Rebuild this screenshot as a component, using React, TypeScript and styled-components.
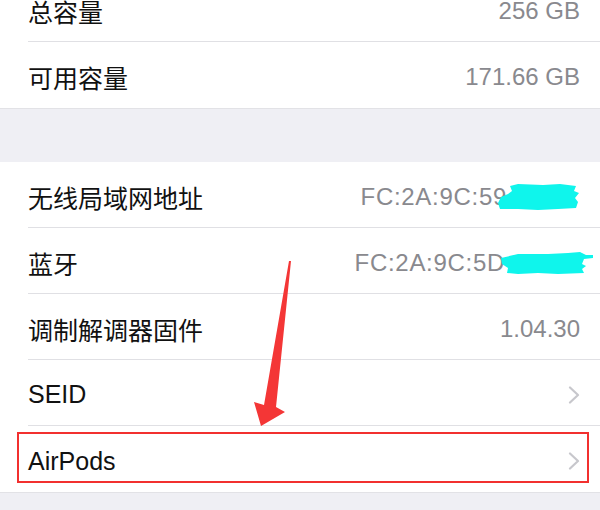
import styled, { createGlobalStyle } from 'styled-components'

const GlobalStyle = createGlobalStyle`
  html, body {
    margin: 0;
    padding: 0;
    background: #efeff4;
    overflow: hidden;
  }
`

const Page = styled.div`
  position: relative;
  width: 600px;
  height: 510px;
  overflow: hidden;
  background: #efeff4;
  font-family: 'Liberation Sans', 'Noto Sans CJK SC', sans-serif;
`

const Sheet = styled.div`
  display: flex;
  flex-direction: column;
  gap: 53px;
  margin-top: -24px;
`

const Group = styled.div`
  background: #fff;
  border-bottom: 1px solid #e2e2e6;
`

const Row = styled.div<{ last?: boolean }>`
  display: flex;
  align-items: center;
  height: 66px;
  margin-left: 28px;
  padding: 4px 20px 0 0;
  box-sizing: border-box;
  border-bottom: ${(p) => (p.last ? 'none' : '1px solid #e0e0e4')};
`

const Label = styled.span`
  flex: 1;
  font-size: 25px;
  color: #111;
`

const Value = styled.span<{ $spaced?: boolean }>`
  display: flex;
  align-items: center;
  font-size: 24px;
  color: #89898e;
  white-space: nowrap;
  letter-spacing: ${(p) => (p.$spaced ? '0.7px' : 'normal')};
`

const Redact = styled.svg<{ $left: number; $right: number }>`
  display: block;
  flex-shrink: 0;
  margin-left: ${(p) => p.$left}px;
  margin-right: ${(p) => p.$right}px;
`

const Chevron = () => (
  <svg width="12" height="18" viewBox="0 0 12 18">
    <path d="M2 1.5 L10 9 L2 16.5" fill="none" stroke="#c7c7cc" strokeWidth="2.2" strokeLinecap="round" strokeLinejoin="round" />
  </svg>
)

const Highlight = styled.div`
  position: absolute;
  left: 17px;
  top: 432px;
  width: 572px;
  height: 51px;
  box-sizing: border-box;
  border: 2px solid #f2302f;
`

const Arrow = styled.svg`
  position: absolute;
  left: 240px;
  top: 250px;
`

export default function App() {
  return (
    <Page>
      <GlobalStyle />
      <Sheet>
        <Group>
          <Row>
            <Label>总容量</Label>
            <Value>256 GB</Value>
          </Row>
          <Row last>
            <Label>可用容量</Label>
            <Value>171.66 GB</Value>
          </Row>
        </Group>
        <Group>
          <Row>
            <Label>无线局域网地址</Label>
            <Value $spaced>
              FC:2A:9C:59
              <Redact $left={-9} $right={0} width="82" height="28" viewBox="0 0 82 28">
                <path
                  d="M12 3 L20 1 L45 2 L62 1 L78 3 L76 8 L81 10 L77 15 L80 19 L78 25 L60 26 L40 27 L20 26 L2 26 L0 20 L3 14 L10 11 L14 8 Z"
                  fill="#0ff5ec"
                />
              </Redact>
            </Value>
          </Row>
          <Row>
            <Label>蓝牙</Label>
            <Value $spaced>
              FC:2A:9C:5D
              <Redact $left={-7} $right={-14} width="96" height="26" viewBox="0 0 96 26">
                <path
                  d="M3 8 L20 4 L50 4 L70 3 L82 2 L88 5 L95 5 L95 8 L86 9 L84 14 L88 16 L84 19 L86 23 L60 24 L40 23 L20 24 L9 23 L10 18 L4 14 Z"
                  fill="#0ff5ec"
                />
              </Redact>
            </Value>
          </Row>
          <Row>
            <Label>调制解调器固件</Label>
            <Value>1.04.30</Value>
          </Row>
          <Row>
            <Label>SEID</Label>
            <Chevron />
          </Row>
          <Row last>
            <Label>AirPods</Label>
            <Chevron />
          </Row>
        </Group>
      </Sheet>
      <Arrow width="60" height="180" viewBox="0 0 60 180">
        <path d="M49 11 L51 11 L36 157 L45 162 L21 176 L14 152 L24 155 Z" fill="#f43636" />
      </Arrow>
      <Highlight />
    </Page>
  )
}
